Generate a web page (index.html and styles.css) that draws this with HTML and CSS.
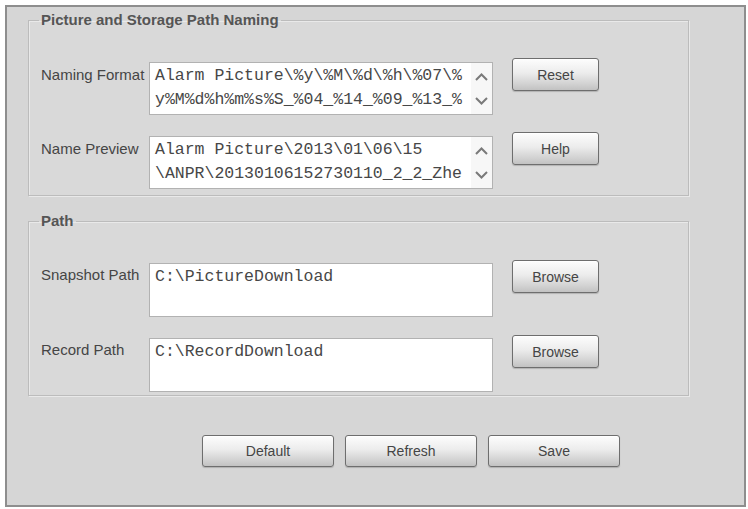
FILE: index.html
```html
<!DOCTYPE html>
<html lang="en">
<head>
<meta charset="utf-8">
<title>Picture and Storage Path</title>
<link rel="stylesheet" href="styles.css">
</head>
<body>
<div class="panel">
  <fieldset class="group group-naming">
    <legend>Picture and Storage Path Naming</legend>
    <div class="rows">
      <div class="row">
        <span class="label">Naming Format</span>
        <div class="textbox">
          <div class="text">Alarm Picture\%y\%M\%d\%h\%07\%
y%M%d%h%m%s%S_%04_%14_%09_%13_%</div>
          <div class="scrollbar">
            <svg width="13" height="8" viewBox="0 0 13 8"><path d="M1 7 L6.5 1.5 L12 7" fill="none" stroke="#7a7a7a" stroke-width="2"/></svg>
            <svg width="13" height="8" viewBox="0 0 13 8"><path d="M1 1 L6.5 6.5 L12 1" fill="none" stroke="#7a7a7a" stroke-width="2"/></svg>
          </div>
        </div>
        <button class="btn">Reset</button>
      </div>
      <div class="row">
        <span class="label">Name Preview</span>
        <div class="textbox">
          <div class="text">Alarm Picture\2013\01\06\15
\ANPR\20130106152730110_2_2_Zhe</div>
          <div class="scrollbar">
            <svg width="13" height="8" viewBox="0 0 13 8"><path d="M1 7 L6.5 1.5 L12 7" fill="none" stroke="#7a7a7a" stroke-width="2"/></svg>
            <svg width="13" height="8" viewBox="0 0 13 8"><path d="M1 1 L6.5 6.5 L12 1" fill="none" stroke="#7a7a7a" stroke-width="2"/></svg>
          </div>
        </div>
        <button class="btn">Help</button>
      </div>
    </div>
  </fieldset>

  <fieldset class="group group-path">
    <legend>Path</legend>
    <div class="rows">
      <div class="row">
        <span class="label">Snapshot Path</span>
        <div class="textbox">
          <div class="text">C:\PictureDownload</div>
        </div>
        <button class="btn">Browse</button>
      </div>
      <div class="row">
        <span class="label">Record Path</span>
        <div class="textbox">
          <div class="text">C:\RecordDownload</div>
        </div>
        <button class="btn">Browse</button>
      </div>
    </div>
  </fieldset>

  <div class="actions">
    <button class="btn btn-wide">Default</button>
    <button class="btn btn-wide">Refresh</button>
    <button class="btn btn-wide">Save</button>
  </div>
</div>
</body>
</html>
```

FILE: styles.css
```css
html, body {
  margin: 0;
  background: #ffffff;
  font-family: "Liberation Sans", Arial, sans-serif;
}

.panel {
  margin: 5px 0 0 5px;
  width: 741px;
  height: 502px;
  box-sizing: border-box;
  border: 2px solid #8e8e8e;
  background: #d6d6d6;
  padding: 5px 0 0 21px;
}

/* etched group boxes */
.group {
  margin: 0;
  min-width: 0;
  width: 661px;
  box-sizing: border-box;
  border: 1px solid #bcbcbc;
  box-shadow: inset 1px 1px 0 #e9e9e9, 1px 1px 0 #e9e9e9;
  background: #d9d9d9;
  padding: 30px 0 6px 12px;
}

.group legend {
  padding: 0 2px;
  margin-left: -2px;
  font-weight: bold;
  font-size: 15px;
  line-height: 16px;
  color: #555555;
}

.group-path {
  margin-top: 17px;
  padding-top: 31px;
  padding-bottom: 3px;
}

.rows {
  display: flex;
  flex-direction: column;
  gap: 17px;
}

.group-path .rows {
  gap: 18px;
}

.row {
  display: grid;
  grid-template-columns: 108px 344px 106px;
  align-items: start;
}

.label {
  margin-top: 9px;
  font-size: 15px;
  line-height: 16px;
  color: #454545;
  white-space: nowrap;
}

.group-path .label {
  margin-top: 7px;
}

.textbox {
  display: flex;
  margin-top: 4px;
  height: 53px;
  box-sizing: border-box;
  border: 1px solid #b2b2b2;
  background: #ffffff;
  overflow: hidden;
}

.group-path .textbox {
  margin-top: 3px;
  height: 54px;
}

.text {
  flex: 1;
  min-width: 0;
  padding: 1px 0 0 5px;
  font-family: "Liberation Mono", "Courier New", monospace;
  font-size: 16.5px;
  line-height: 24px;
  color: #474747;
  white-space: pre;
  overflow: hidden;
}

.scrollbar {
  width: 21px;
  flex: none;
  background: #f7f7f7;
  display: flex;
  flex-direction: column;
  align-items: center;
  padding-top: 10px;
  gap: 16px;
}

.scrollbar svg {
  display: block;
}

.btn {
  height: 33px;
  padding: 0;
  border: 1px solid #6e6e6e;
  border-radius: 3px;
  background: linear-gradient(#fdfdfd 0%, #ececec 45%, #d2d2d2 80%, #c2c2c2 100%);
  box-shadow: inset 0 1px 0 #ffffff, 0 1px 1px rgba(0, 0, 0, 0.18);
  font-family: "Liberation Sans", Arial, sans-serif;
  font-size: 14px;
  color: #454545;
}

.row .btn {
  width: 87px;
  margin-left: 19px;
}

.actions {
  display: flex;
  gap: 11px;
  margin: 39px 0 0 174px;
}

.btn-wide {
  width: 132px;
  height: 32px;
}
```
